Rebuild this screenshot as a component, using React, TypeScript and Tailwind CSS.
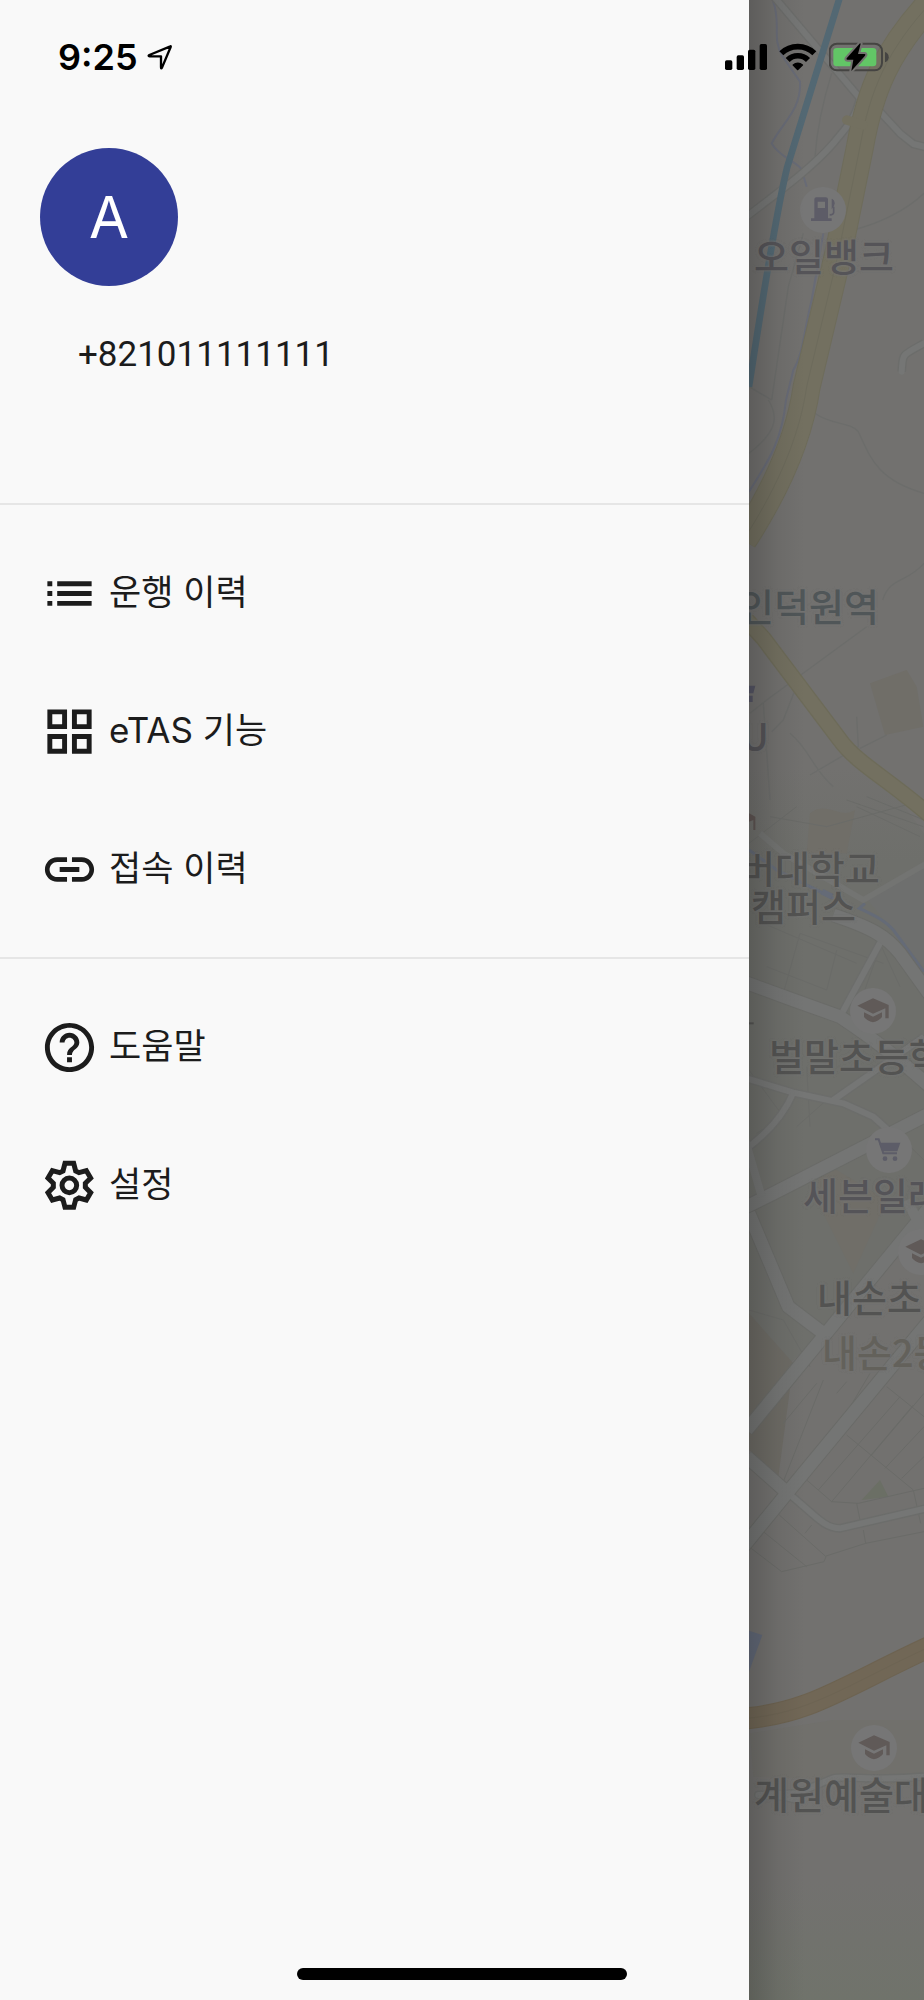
import React from "react";
import { MdGridView, MdHelpOutline, MdLink, MdList } from "react-icons/md";

type IconProps = { className?: string };

const GearIcon = ({ className }: IconProps) => (
  <svg viewBox="-88 -88 177 177" className={className} fill="none" stroke="currentColor" aria-hidden="true">
    <path
      d="M-19 -43L-13 -66H13L19 -43L29 -38L51 -44L64 -22L48 -6V6L64 22L51 44L29 38L19 43L13 66H-13L-19 43L-29 38L-51 44L-64 22L-48 6V-6L-64 -22L-51 -44L-29 -38Z"
      strokeWidth="15"
    />
    <circle r="22" strokeWidth="15" />
  </svg>
);

const SchoolIcon = ({ className }: IconProps) => (
  <svg viewBox="-48 -48 96 96" className={className} fill="currentColor" aria-hidden="true">
    <path d="M-47 -16L0 -38L47 -18V22H37V-8L0 8Z" />
    <path d="M-27 4L0 17L27 4V18Q18 30 0 34Q-18 30 -27 18Z" />
  </svg>
);

const GasIcon = ({ className }: IconProps) => (
  <svg viewBox="-48 -48 96 96" className={className} fill="none" aria-hidden="true">
    <path
      d="M-26 -32Q-26 -38 -20 -38H8Q15 -38 15 -32V25H26V33H-36V25H-26ZM-16 -25V-6H6V-25Z"
      fill="currentColor"
      fillRule="evenodd"
    />
    <path d="M26 -34Q35 -30 35 -20T26 -2Z" fill="currentColor" />
    <path d="M32 -10V8Q30 16 20 14" stroke="currentColor" strokeWidth="5" />
  </svg>
);

const CartIcon = ({ className }: IconProps) => (
  <svg viewBox="-48 -48 96 96" className={className} fill="none" aria-hidden="true">
    <path d="M-42 -32H-31L-17 10H24" stroke="currentColor" strokeWidth="6" />
    <path d="M-30 -22H34L25 4H-20Z" fill="currentColor" />
    <circle cx="-12" cy="26" r="7" fill="currentColor" />
    <circle cx="18" cy="26" r="7" fill="currentColor" />
  </svg>
);

const historyItems = [
  { label: "운행 이력", icon: MdList },
  { label: "eTAS 기능", icon: MdGridView },
  { label: "접속 이력", icon: MdLink },
];

const supportItems = [
  { label: "도움말", icon: MdHelpOutline },
  { label: "설정", icon: GearIcon },
];

const places = [
  { name: "오일뱅크", className: "left-[5px] top-[236px] text-[#555458]" },
  { name: "인덕원역", className: "left-[-10px] top-[586px] text-[#505658]" },
  { name: "CU", className: "left-[-32px] top-[716px] text-[#555458]" },
  { name: "사이버대학교", className: "left-[-79px] top-[848px] text-[#535352]" },
  { name: "캠퍼스", className: "left-[2px] top-[886px] text-[#535352]" },
  { name: "벌말초등학교", className: "left-[20px] top-[1036px] text-[#535352]" },
  { name: "세븐일레븐", className: "left-[54px] top-[1175px] text-[#555458]" },
  { name: "내손초", className: "left-[68px] top-[1277px] text-[#535352]" },
  { name: "내손2동", className: "left-[73px] top-[1332px] text-[#63615b]" },
  { name: "계원예술대", className: "left-[5px] top-[1774px] text-[#535352]" },
];

const pins = [
  { icon: GasIcon, className: "left-[51px] top-[187px] text-[#5d5c67]" },
  { icon: SchoolIcon, className: "left-[101px] top-[988px] text-[#605a58]" },
  { icon: CartIcon, className: "left-[117px] top-[1127px] text-[#5d5d68]" },
  { icon: SchoolIcon, className: "left-[149px] top-[1229px] text-[#605a58]" },
  { icon: SchoolIcon, className: "left-[102px] top-[1725px] text-[#605a58]" },
];

const minorRoads =
  "M147 1160L215 1200M345 1240C390 1275 450 1265 475 1295C510 1370 530 1440 672 1480M205 1200C240 1255 225 1300 147 1360M672 1690C620 1750 570 1730 548 1800M500 1880L200 2100L150 2140M190 2110L210 2400M285 2070L250 2160L215 2195M470 2150L475 2240L330 2325M480 2245L560 2205M270 2200C330 2250 340 2310 400 2360M460 690C540 670 620 630 672 580M310 700L265 860L215 1200M395 220C370 300 350 400 345 470";

const blocks =
  "M147 2530L290 2420M210 2450L380 2480L672 2400M250 2980L300 2800L550 2890M190 2770L470 2890M380 2970L410 2850M480 3010L530 2870M200 2900L380 2970M440 2400L670 2480M470 2420L660 2510M500 2390L672 2460M540 2830L600 2960M147 3930L250 3960L330 4100M240 4470L370 4140M320 4440L510 4120M320 4440L395 4505L475 4510L672 4465M395 4505L640 4215M355 4470L600 4190M440 4305L640 4470M560 4160L672 4250M515 4365L672 4180M555 4405L672 4280M605 4435L672 4370M470 4510L480 4560M640 4470L662 4570M238 4545L378 4670L372 4685L245 4715L147 4640M315 4600L335 4575M190 4595L320 4700M378 4668L497 4630L672 4595M490 4590L497 4630M250 4270L350 4150M410 4180L440 4145M147 3210L250 3350L170 3400M290 3380L380 3300M320 3200L330 3380M600 3380L672 3340M610 3420L672 3480";

// Map that stays visible behind the open drawer
const MapView = () => {
  return (
    <section aria-label="지도" className="relative w-[175px] shrink-0 overflow-hidden bg-[#72716f]">
      <svg
        viewBox="147 0 525 6000"
        preserveAspectRatio="xMinYMin slice"
        className="absolute inset-0 h-full w-full"
        fill="none"
        aria-hidden="true"
      >
        <defs>
          <linearGradient id="park" x1="0" y1="0" x2="0" y2="1">
            <stop offset="0" stopColor="#72716f" />
            <stop offset="1" stopColor="#70736b" />
          </linearGradient>
          <linearGradient id="town" x1="0" y1="0" x2="0" y2="1">
            <stop offset="0" stopColor="#72716f" />
            <stop offset="0.15" stopColor="#6e6f6b" />
            <stop offset="1" stopColor="#6e6f6b" />
          </linearGradient>
        </defs>
        <path d="M147 2300H530L672 2500V3620L370 4000L147 4200Z" fill="url(#town)" />
        <path d="M330 2440C380 2400 420 2460 465 2430L440 2560H320Z" fill="#706e68" />
        <path d="M360 3480L560 3600L460 3820L350 3600Z" fill="#706e68" />
        <path d="M147 3940L280 4090L235 4430L147 4350Z" fill="#6d6b65" />
        <path d="M510 2050L620 2010L650 2060L670 2180L555 2205Z" fill="#706e68" />
        <path d="M150 5200L400 5160H672V5360L440 5340L160 5330Z" fill="#71706c" />
        <path d="M485 4500L540 4440L565 4490Z" fill="#6b6f65" />
        <rect x="147" y="5640" width="525" height="360" fill="url(#park)" />
        <path d="M495 2690L672 2590V2900L545 2750Z" fill="#6e6f6e" />

        <path d={minorRoads} stroke="#6c6d6b" strokeWidth="4" />
        <path d={blocks} stroke="#6a6b68" strokeWidth="3" />

        {/* streams */}
        <g stroke="#686b76" strokeWidth="6">
          <path d="M218 0C245 70 215 110 245 165L300 245C305 330 245 370 215 430C235 470 300 490 305 510L320 560" />
          <path d="M370 700L335 900C310 1000 310 1060 280 1110L258 1200M258 1200C245 1330 200 1390 147 1475" />
          <path d="M147 2550L230 2610L330 2660L400 2695M495 2710L478 2725C520 2745 555 2760 580 2790L672 2915" stroke="#656b77" strokeWidth="9" />
          <path d="M366 2675L396 2690" stroke="#656b77" strokeWidth="18" />
        </g>
        <path d="M147 4892L187 4905L147 5015Z" fill="#626978" />

        {/* side streets, dark casing first and the surface over it */}
        <g strokeLinejoin="round">
          <g stroke="#6c6d6b" strokeWidth="26">
            <path d="M222 -10L480 295C465 360 440 380 400 430C330 510 230 580 140 650" />
            <path d="M535 330L600 400L640 432L680 442" />
            <path d="M672 1030C600 1070 610 1060 605 1115" />
            <path d="M545 2820L415 3060M140 3235L280 3278L430 3310L520 3350L570 3395M400 3300L672 3110M280 3278C250 3350 200 3400 147 3440" />
            <path d="M265 4480C340 4540 370 4585 420 4585L680 4525" />
            <path d="M310 5405L250 5390L175 5385L290 5380L400 5335C430 5325 500 5345 672 5330" />
          </g>
          <g stroke="#6a6b68" strokeWidth="44">
            <path d="M130 2945L280 3000L420 3050C540 3130 600 3180 690 3260" />
            <path d="M400 2745C520 2785 560 2810 600 2860L690 2985" />
            <path d="M130 3625L220 3580L680 3345" />
            <path d="M147 3640L265 3920L370 4000M140 4290L370 4010L690 3620" />
            <path d="M140 4370L262 4478L690 3960M262 4478L130 4640" />
          </g>
          <g stroke="#757675" strokeWidth="18">
            <path d="M222 -10L480 295C465 360 440 380 400 430C330 510 230 580 140 650" />
            <path d="M535 330L600 400L640 432L680 442" />
            <path d="M672 1030C600 1070 610 1060 605 1115" strokeLinecap="round" />
            <path d="M545 2820L415 3060M140 3235L280 3278L430 3310L520 3350L570 3395M400 3300L672 3110M280 3278C250 3350 200 3400 147 3440" />
            <path d="M180 2500L250 2560L490 2700L680 2590" stroke="#737472" />
            <path d="M265 4480C340 4540 370 4585 420 4585L680 4525" />
            <path d="M310 5405L250 5390L175 5385L290 5380L400 5335C430 5325 500 5345 672 5330" />
          </g>
          <g stroke="#747574" strokeWidth="38">
            <path d="M130 2945L280 3000L420 3050C540 3130 600 3180 690 3260" />
            <path d="M400 2745C520 2785 560 2810 600 2860L690 2985" />
            <path d="M130 3625L220 3580L680 3345" />
            <path d="M130 3400L185 3590" strokeWidth="24" />
            <path d="M147 3640L265 3920L370 4000M140 4290L370 4010L690 3620" />
            <path d="M140 4370L262 4478L690 3960M262 4478L130 4640" />
            <path d="M620 3600L672 3700" strokeWidth="30" />
          </g>
        </g>

        {/* railway */}
        <path d="M420 -10L262 500C235 610 190 880 147 1160" stroke="#536873" strokeWidth="20" />

        {/* highways */}
        <g strokeLinejoin="round">
          <path d="M700 0C560 150 510 270 480 440L415 760L320 1160C300 1300 240 1450 130 1620" stroke="#6e6c5b" strokeWidth="84" />
          <path d="M700 0C560 150 510 270 480 440L415 760L320 1160C300 1300 240 1450 130 1620" stroke="#737060" strokeWidth="78" />
          <path d="M700 0C560 150 510 270 480 440L415 760L320 1160C300 1300 240 1450 130 1620" stroke="#6d6b5c" strokeWidth="3" />
          <path d="M440 360L490 375" stroke="#737060" strokeWidth="28" strokeLinecap="round" />
          <path d="M140 1860L190 1915L420 2220C470 2290 570 2340 700 2455" stroke="#6d6b59" strokeWidth="50" />
          <path d="M140 1860L190 1915L420 2220C470 2290 570 2340 700 2455" stroke="#737060" strokeWidth="42" />
          <path d="M130 5156C330 5140 430 5060 690 4940" stroke="#6d6351" strokeWidth="66" />
          <path d="M130 5156C330 5140 430 5060 690 4940" stroke="#716756" strokeWidth="60" />
          <path d="M130 5156C330 5140 430 5060 690 4940" stroke="#6d6453" strokeWidth="3" />
        </g>
        <path d="M147 2057H166L160 2080H147ZM147 2087H158V2106H147Z" fill="#555564" />
        <path d="M147 2440L166 2450V2490H160V2460L147 2465Z" fill="#5f5553" />
        <path d="M147 3070H161" stroke="#555553" strokeWidth="6" />
      </svg>

      {pins.map((pin, index) => {
        const Icon = pin.icon;
        return (
          <span
            key={index}
            className={`absolute flex h-[46px] w-[46px] items-center justify-center rounded-full bg-[#767676] ${pin.className}`}
          >
            <Icon className="h-8 w-8" />
          </span>
        );
      })}

      {places.map((place) => (
        <span
          key={place.name}
          className={`absolute whitespace-nowrap font-['Noto_Sans_CJK_KR',sans-serif] text-[38px] leading-[38px] font-medium [text-shadow:0_0_3px_#747473,0_0_3px_#747473] ${place.className}`}
        >
          {place.name}
        </span>
      ))}

      {/* drawer shadow */}
      <div className="absolute inset-y-0 left-0 w-14 bg-linear-to-r from-black/18 via-black/6 to-transparent"></div>
    </section>
  );
};

const StatusBar = () => {
  return (
    <header className="absolute inset-x-0 top-0 z-10 flex h-[114px] items-center justify-between pr-[35px] pl-[58px] text-black">
      <div className="flex items-center gap-[9px]">
        <time className="text-[36px] leading-[44px] font-semibold">9:25</time>
        <svg viewBox="441 130 78 78" className="h-[26px] w-[26px]" fill="none" aria-hidden="true">
          <path
            d="M511 137Q513 136 512 139L486 201Q483 206 483 200V167H449Q443 166 448 163Z"
            stroke="currentColor"
            strokeWidth="7"
            strokeLinejoin="round"
          />
        </svg>
      </div>

      <div className="flex items-center gap-3">
        <svg viewBox="73 131 126 78" className="h-[26px] w-[42px]" fill="currentColor" aria-hidden="true">
          <rect x="73" y="180" width="22" height="29" rx="5" />
          <rect x="108" y="165" width="22" height="44" rx="5" />
          <rect x="142" y="148" width="22" height="61" rx="5" />
          <rect x="177" y="131" width="22" height="78" rx="5" />
        </svg>
        <svg viewBox="236 127 114 84" className="h-7 w-[38px]" fill="none" stroke="currentColor" aria-hidden="true">
          <path d="M243 158A71 71 0 0 1 342 158" strokeWidth="17" />
          <path d="M262 178A43 43 0 0 1 323 178" strokeWidth="17" />
          <path d="M292 206L279 193A20 20 0 0 1 306 193Z" fill="currentColor" strokeWidth="5" strokeLinejoin="round" />
        </svg>
        <svg viewBox="387 125 180 90" className="h-[30px] w-[60px]" fill="none" aria-hidden="true">
          <rect x="389" y="130" width="157" height="80" rx="22" stroke="#454442" strokeWidth="6" />
          <path d="M555 155C570 160 570 181 555 186Z" fill="#454442" />
          <rect x="400" y="143" width="129" height="55" rx="10" fill="#62c666" />
          <path
            d="M480 129L440 174Q438 178 442 178H460L454 212L495 166Q498 162 494 161H474L482 130Z"
            fill="#000"
            stroke="#72716f"
            strokeWidth="12"
            paintOrder="stroke"
            strokeLinejoin="round"
          />
        </svg>
      </div>
    </header>
  );
};

const MenuList = ({ items }: { items: typeof historyItems }) => {
  return (
    <ul className="border-t-2 border-[#e6e6e6] py-[19px]">
      {items.map(({ label, icon: Icon }) => (
        <li key={label}>
          <a href="#" className="flex h-[138px] items-center gap-2.5 px-10">
            <Icon className="h-[59px] w-[59px]" />
            <span className="pb-0.5 text-[35px] leading-[44px]">{label}</span>
          </a>
        </li>
      ))}
    </ul>
  );
};

const App = () => {
  return (
    <div className="relative flex min-h-screen overflow-hidden font-['Inter','Noto_Sans_CJK_KR',sans-serif] text-[#1c1c1c]">
      <StatusBar />

      <aside className="min-w-0 flex-1 bg-[#f9f9f9]">
        <div className="h-[503px] px-10 pt-[148px]">
          <div className="flex h-[138px] w-[138px] items-center justify-center rounded-full bg-[#333e97] text-[58px] leading-none text-white">
            A
          </div>
          <p className="mt-[47px] pl-[38px] font-['Roboto',sans-serif] text-[35px] leading-[44px]">+821011111111</p>
        </div>
        <nav>
          <MenuList items={historyItems} />
          <MenuList items={supportItems} />
        </nav>
      </aside>

      <MapView />

      {/* home indicator */}
      <div className="absolute bottom-5 left-1/2 z-10 h-3 w-[330px] -translate-x-1/2 rounded-full bg-black"></div>
    </div>
  );
};

export default App;
